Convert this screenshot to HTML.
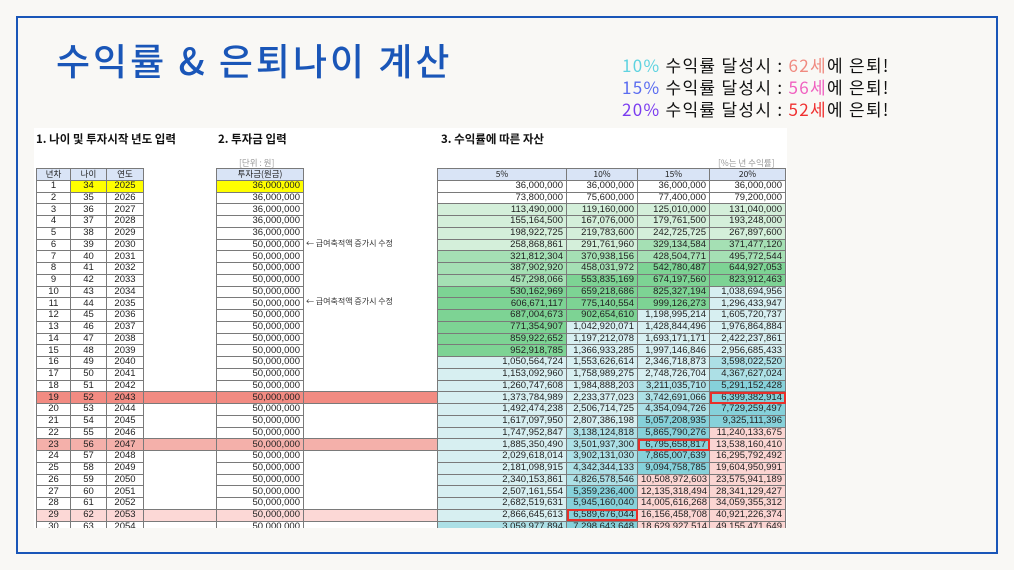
<!DOCTYPE html>
<html><head><meta charset="utf-8"><style>
*{margin:0;padding:0;box-sizing:border-box}
body{width:1014px;height:570px;background:#f9f8f5;position:relative;overflow:hidden;font-family:"Liberation Sans","Noto Sans CJK KR",sans-serif}
.frame{position:absolute;left:16px;top:16px;width:982px;height:538px;border:2px solid #1a56b8}
.title{position:absolute;left:56px;top:32px;font-size:37px;color:#1a56b8;font-family:"Noto Sans CJK KR",sans-serif;letter-spacing:3px;white-space:nowrap;font-weight:500}
.leg{position:absolute;left:622px;font-size:17px;font-family:"Noto Sans CJK KR",sans-serif;letter-spacing:1.3px;white-space:nowrap;color:#111;line-height:20px}
.sheet{position:absolute;left:34px;top:128px;width:753px;height:400px;background:#fff;overflow:hidden}
.h{position:absolute;top:3px;font-size:11.5px;font-weight:bold;font-family:"Noto Sans CJK KR",sans-serif;color:#111;white-space:nowrap}
.u{position:absolute;top:29px;font-size:8.5px;color:#999;font-family:"Noto Sans CJK KR",sans-serif;white-space:nowrap}
table{position:absolute;left:2px;top:40px;border-collapse:collapse;table-layout:fixed;width:749px}
td{border:1px solid #7a7a7a;height:11.75px;font-size:9.5px;line-height:10px;padding:0 3px;text-align:right;color:#222;white-space:nowrap;overflow:visible}
td.g{border-top:none;border-bottom:none;background:transparent}
.c{text-align:center}
tr.hd td{background:#d9e4f6;text-align:center;font-family:"Noto Sans CJK KR",sans-serif;font-size:8.5px}
tr.hd td.g{background:#fff}
.y{background:#ffff00}
.a{background:#d4efda}.b{background:#a5e0b4}.cc{background:#7dd394}
.t1{background:#d7eff1}.t2{background:#ade0e6}.t3{background:#86d1da}.p{background:#fbd5d2}
tr.r1 td.l{background:#f28b82}tr.r2 td.l{background:#f4b0aa}tr.r3 td.l{background:#fcd8d6}
.o{outline:2px solid #e8302a;outline-offset:-2px}
.n{position:absolute;left:272px;font-size:8px;font-family:"Noto Sans CJK KR",sans-serif;color:#333;white-space:nowrap}
</style></head><body>
<div class="frame"></div>
<div class="title">수익률 &amp; 은퇴나이 계산</div>
<div class="leg" style="top:55px"><span style="color:#5fd3e0">10%</span> 수익률 달성시 : <span style="color:#f08a80">62세</span>에 은퇴!</div>
<div class="leg" style="top:77px"><span style="color:#5a6cf0">15%</span> 수익률 달성시 : <span style="color:#f060c0">56세</span>에 은퇴!</div>
<div class="leg" style="top:99px"><span style="color:#7a3cf0">20%</span> 수익률 달성시 : <span style="color:#f03030">52세</span>에 은퇴!</div>
<div class="sheet">
<div class="h" style="left:2px">1. 나이 및 투자시작 년도 입력</div>
<div class="h" style="left:184px">2. 투자금 입력</div>
<div class="h" style="left:407px">3. 수익률에 따른 자산</div>
<div class="u" style="left:205px">[단위 : 원]</div>
<div class="u" style="left:684px">[%는 년 수익률]</div>
<div class="n" style="top:110px">← 급여축적액 증가시 수정</div>
<div class="n" style="top:168px">← 급여축적액 증가시 수정</div>
<table>
<colgroup><col style="width:34px"><col style="width:36px"><col style="width:37px"><col style="width:73px"><col style="width:87px"><col style="width:134px"><col style="width:129px"><col style="width:71px"><col style="width:72px"><col style="width:76px"></colgroup>
<tr class="hd"><td>년차</td><td>나이</td><td>연도</td><td class="g"></td><td>투자금(원금)</td><td class="g"></td><td>5%</td><td>10%</td><td>15%</td><td>20%</td></tr>
<tr><td class="c">1</td><td class="c y">34</td><td class="c y">2025</td><td class="g"></td><td class="y">36,000,000</td><td class="g"></td><td>36,000,000</td><td>36,000,000</td><td>36,000,000</td><td>36,000,000</td></tr>
<tr><td class="c">2</td><td class="c">35</td><td class="c">2026</td><td class="g"></td><td>36,000,000</td><td class="g"></td><td>73,800,000</td><td>75,600,000</td><td>77,400,000</td><td>79,200,000</td></tr>
<tr><td class="c">3</td><td class="c">36</td><td class="c">2027</td><td class="g"></td><td>36,000,000</td><td class="g"></td><td class="a">113,490,000</td><td class="a">119,160,000</td><td class="a">125,010,000</td><td class="a">131,040,000</td></tr>
<tr><td class="c">4</td><td class="c">37</td><td class="c">2028</td><td class="g"></td><td>36,000,000</td><td class="g"></td><td class="a">155,164,500</td><td class="a">167,076,000</td><td class="a">179,761,500</td><td class="a">193,248,000</td></tr>
<tr><td class="c">5</td><td class="c">38</td><td class="c">2029</td><td class="g"></td><td>36,000,000</td><td class="g"></td><td class="a">198,922,725</td><td class="a">219,783,600</td><td class="a">242,725,725</td><td class="a">267,897,600</td></tr>
<tr><td class="c">6</td><td class="c">39</td><td class="c">2030</td><td class="g"></td><td>50,000,000</td><td class="g"></td><td class="a">258,868,861</td><td class="a">291,761,960</td><td class="b">329,134,584</td><td class="b">371,477,120</td></tr>
<tr><td class="c">7</td><td class="c">40</td><td class="c">2031</td><td class="g"></td><td>50,000,000</td><td class="g"></td><td class="b">321,812,304</td><td class="b">370,938,156</td><td class="b">428,504,771</td><td class="b">495,772,544</td></tr>
<tr><td class="c">8</td><td class="c">41</td><td class="c">2032</td><td class="g"></td><td>50,000,000</td><td class="g"></td><td class="b">387,902,920</td><td class="b">458,031,972</td><td class="cc">542,780,487</td><td class="cc">644,927,053</td></tr>
<tr><td class="c">9</td><td class="c">42</td><td class="c">2033</td><td class="g"></td><td>50,000,000</td><td class="g"></td><td class="b">457,298,066</td><td class="cc">553,835,169</td><td class="cc">674,197,560</td><td class="cc">823,912,463</td></tr>
<tr><td class="c">10</td><td class="c">43</td><td class="c">2034</td><td class="g"></td><td>50,000,000</td><td class="g"></td><td class="cc">530,162,969</td><td class="cc">659,218,686</td><td class="cc">825,327,194</td><td class="t1">1,038,694,956</td></tr>
<tr><td class="c">11</td><td class="c">44</td><td class="c">2035</td><td class="g"></td><td>50,000,000</td><td class="g"></td><td class="cc">606,671,117</td><td class="cc">775,140,554</td><td class="cc">999,126,273</td><td class="t1">1,296,433,947</td></tr>
<tr><td class="c">12</td><td class="c">45</td><td class="c">2036</td><td class="g"></td><td>50,000,000</td><td class="g"></td><td class="cc">687,004,673</td><td class="cc">902,654,610</td><td class="t1">1,198,995,214</td><td class="t1">1,605,720,737</td></tr>
<tr><td class="c">13</td><td class="c">46</td><td class="c">2037</td><td class="g"></td><td>50,000,000</td><td class="g"></td><td class="cc">771,354,907</td><td class="t1">1,042,920,071</td><td class="t1">1,428,844,496</td><td class="t1">1,976,864,884</td></tr>
<tr><td class="c">14</td><td class="c">47</td><td class="c">2038</td><td class="g"></td><td>50,000,000</td><td class="g"></td><td class="cc">859,922,652</td><td class="t1">1,197,212,078</td><td class="t1">1,693,171,171</td><td class="t1">2,422,237,861</td></tr>
<tr><td class="c">15</td><td class="c">48</td><td class="c">2039</td><td class="g"></td><td>50,000,000</td><td class="g"></td><td class="cc">952,918,785</td><td class="t1">1,366,933,285</td><td class="t1">1,997,146,846</td><td class="t1">2,956,685,433</td></tr>
<tr><td class="c">16</td><td class="c">49</td><td class="c">2040</td><td class="g"></td><td>50,000,000</td><td class="g"></td><td class="t1">1,050,564,724</td><td class="t1">1,553,626,614</td><td class="t1">2,346,718,873</td><td class="t2">3,598,022,520</td></tr>
<tr><td class="c">17</td><td class="c">50</td><td class="c">2041</td><td class="g"></td><td>50,000,000</td><td class="g"></td><td class="t1">1,153,092,960</td><td class="t1">1,758,989,275</td><td class="t1">2,748,726,704</td><td class="t2">4,367,627,024</td></tr>
<tr><td class="c">18</td><td class="c">51</td><td class="c">2042</td><td class="g"></td><td>50,000,000</td><td class="g"></td><td class="t1">1,260,747,608</td><td class="t1">1,984,888,203</td><td class="t2">3,211,035,710</td><td class="t3">5,291,152,428</td></tr>
<tr class="r1"><td class="c l">19</td><td class="c l">52</td><td class="c l">2043</td><td class="l"></td><td class="l">50,000,000</td><td class="l"></td><td class="t1">1,373,784,989</td><td class="t1">2,233,377,023</td><td class="t2">3,742,691,066</td><td class="t3 o">6,399,382,914</td></tr>
<tr><td class="c">20</td><td class="c">53</td><td class="c">2044</td><td class="g"></td><td>50,000,000</td><td class="g"></td><td class="t1">1,492,474,238</td><td class="t1">2,506,714,725</td><td class="t2">4,354,094,726</td><td class="t3">7,729,259,497</td></tr>
<tr><td class="c">21</td><td class="c">54</td><td class="c">2045</td><td class="g"></td><td>50,000,000</td><td class="g"></td><td class="t1">1,617,097,950</td><td class="t1">2,807,386,198</td><td class="t3">5,057,208,935</td><td class="t3">9,325,111,396</td></tr>
<tr><td class="c">22</td><td class="c">55</td><td class="c">2046</td><td class="g"></td><td>50,000,000</td><td class="g"></td><td class="t1">1,747,952,847</td><td class="t2">3,138,124,818</td><td class="t3">5,865,790,276</td><td class="p">11,240,133,675</td></tr>
<tr class="r2"><td class="c l">23</td><td class="c l">56</td><td class="c l">2047</td><td class="l"></td><td class="l">50,000,000</td><td class="l"></td><td class="t1">1,885,350,490</td><td class="t2">3,501,937,300</td><td class="t3 o">6,795,658,817</td><td class="p">13,538,160,410</td></tr>
<tr><td class="c">24</td><td class="c">57</td><td class="c">2048</td><td class="g"></td><td>50,000,000</td><td class="g"></td><td class="t1">2,029,618,014</td><td class="t2">3,902,131,030</td><td class="t3">7,865,007,639</td><td class="p">16,295,792,492</td></tr>
<tr><td class="c">25</td><td class="c">58</td><td class="c">2049</td><td class="g"></td><td>50,000,000</td><td class="g"></td><td class="t1">2,181,098,915</td><td class="t2">4,342,344,133</td><td class="t3">9,094,758,785</td><td class="p">19,604,950,991</td></tr>
<tr><td class="c">26</td><td class="c">59</td><td class="c">2050</td><td class="g"></td><td>50,000,000</td><td class="g"></td><td class="t1">2,340,153,861</td><td class="t2">4,826,578,546</td><td class="p">10,508,972,603</td><td class="p">23,575,941,189</td></tr>
<tr><td class="c">27</td><td class="c">60</td><td class="c">2051</td><td class="g"></td><td>50,000,000</td><td class="g"></td><td class="t1">2,507,161,554</td><td class="t3">5,359,236,400</td><td class="p">12,135,318,494</td><td class="p">28,341,129,427</td></tr>
<tr><td class="c">28</td><td class="c">61</td><td class="c">2052</td><td class="g"></td><td>50,000,000</td><td class="g"></td><td class="t1">2,682,519,631</td><td class="t3">5,945,160,040</td><td class="p">14,005,616,268</td><td class="p">34,059,355,312</td></tr>
<tr class="r3"><td class="c l">29</td><td class="c l">62</td><td class="c l">2053</td><td class="l"></td><td class="l">50,000,000</td><td class="l"></td><td class="t1">2,866,645,613</td><td class="t3 o">6,589,676,044</td><td class="p">16,156,458,708</td><td class="p">40,921,226,374</td></tr>
<tr><td class="c">30</td><td class="c">63</td><td class="c">2054</td><td class="g"></td><td>50,000,000</td><td class="g"></td><td class="t2">3,059,977,894</td><td class="t3">7,298,643,648</td><td class="p">18,629,927,514</td><td class="p">49,155,471,649</td></tr>
</table>
</div>
</body></html>
